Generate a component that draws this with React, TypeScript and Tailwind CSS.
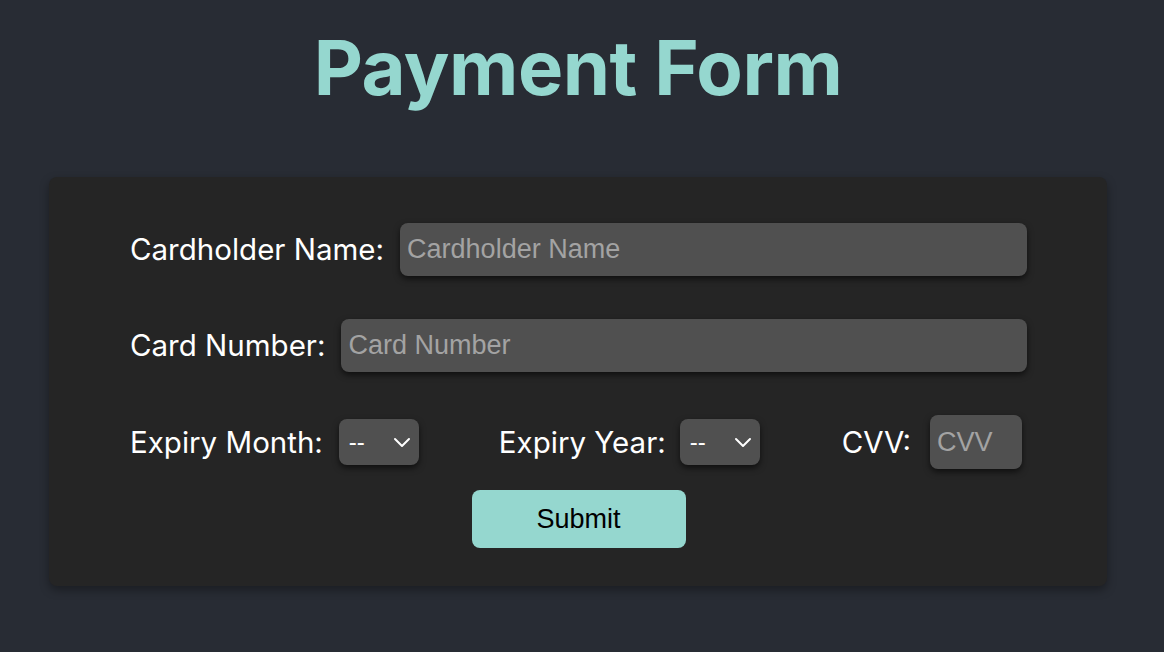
import React from 'react';

const Chevron = () => (
  <svg className="pointer-events-none absolute right-[8px] top-1/2 -translate-y-1/2" width="18" height="12" viewBox="0 0 18 12" fill="none">
    <path d="M2 3l7 7 7-7" stroke="#ffffff" strokeWidth="2" strokeLinecap="round" strokeLinejoin="round" />
  </svg>
);

function Select({ options }: { options: string[] }) {
  return (
    <div className="relative w-[80px] h-[46px] shrink-0">
      <select className="appearance-none w-full h-full rounded-[8px] bg-[#505050] text-white text-[24px] pl-[10px] outline-none shadow-[0_3px_6px_rgba(0,0,0,0.6)] [font-family:'Liberation_Sans',Arial,sans-serif]">
        {options.map((o) => (
          <option key={o}>{o}</option>
        ))}
      </select>
      <Chevron />
    </div>
  );
}

const inputCls =
  "h-[53px] rounded-[8px] bg-[#505050] text-white text-[27px] px-[7px] outline-none placeholder:text-[#a3a3a3] shadow-[0_3px_6px_rgba(0,0,0,0.6)] [font-family:'Liberation_Sans',Arial,sans-serif]";

const labelCls = 'text-white text-[29.5px] whitespace-nowrap';

export default function App() {
  const months = ['--', '01', '02', '03', '04', '05', '06', '07', '08', '09', '10', '11', '12'];
  const years = ['--', '2024', '2025', '2026', '2027', '2028'];

  return (
    <div className="min-h-screen w-full bg-[#282c34] [font-family:Inter,'Noto_Sans',sans-serif] pt-[19px]">
      <h1 className="text-center text-[76px] font-bold leading-[96px] text-[#95d7cf] tracking-[-0.5px] -ml-[8px]">Payment Form</h1>

      <div className="ml-[49px] w-[1058px] mt-[62px] rounded-[8px] bg-[#252525] pl-[81px] pr-[80px] pt-[46px] pb-[38px] shadow-[0_4px_10px_rgba(0,0,0,0.35)]">
        <div className="flex flex-col">
          {/* Cardholder */}
          <div className="flex items-center gap-[16px]">
            <label className={labelCls}>Cardholder Name:</label>
            <input className={`${inputCls} flex-1`} placeholder="Cardholder Name" />
          </div>

          {/* Card number */}
          <div className="flex items-center gap-[16px] mt-[43px]">
            <label className={labelCls}>Card Number:</label>
            <input className={`${inputCls} flex-1`} placeholder="Card Number" />
          </div>

          {/* Expiry + CVV */}
          <div className="flex items-center gap-[80px] mt-[43px] h-[54px]">
            <div className="flex items-center gap-[16px]">
              <label className={labelCls}>Expiry Month:</label>
              <Select options={months} />
            </div>
            <div className="flex items-center gap-[14px]">
              <label className={labelCls}>Expiry Year:</label>
              <Select options={years} />
            </div>
            <div className="flex items-center gap-[19px] ml-[2px]">
              <label className={labelCls}>CVV:</label>
              <input className={`${inputCls} w-[92px] h-[54px]`} placeholder="CVV" />
            </div>
          </div>

          <div className="flex justify-center mt-[21px]">
            <button className="w-[214px] h-[58px] rounded-[8px] bg-[#95d7cf] text-black text-[27px] [font-family:'Liberation_Sans',Arial,sans-serif]">
              Submit
            </button>
          </div>
        </div>
      </div>
    </div>
  );
}
